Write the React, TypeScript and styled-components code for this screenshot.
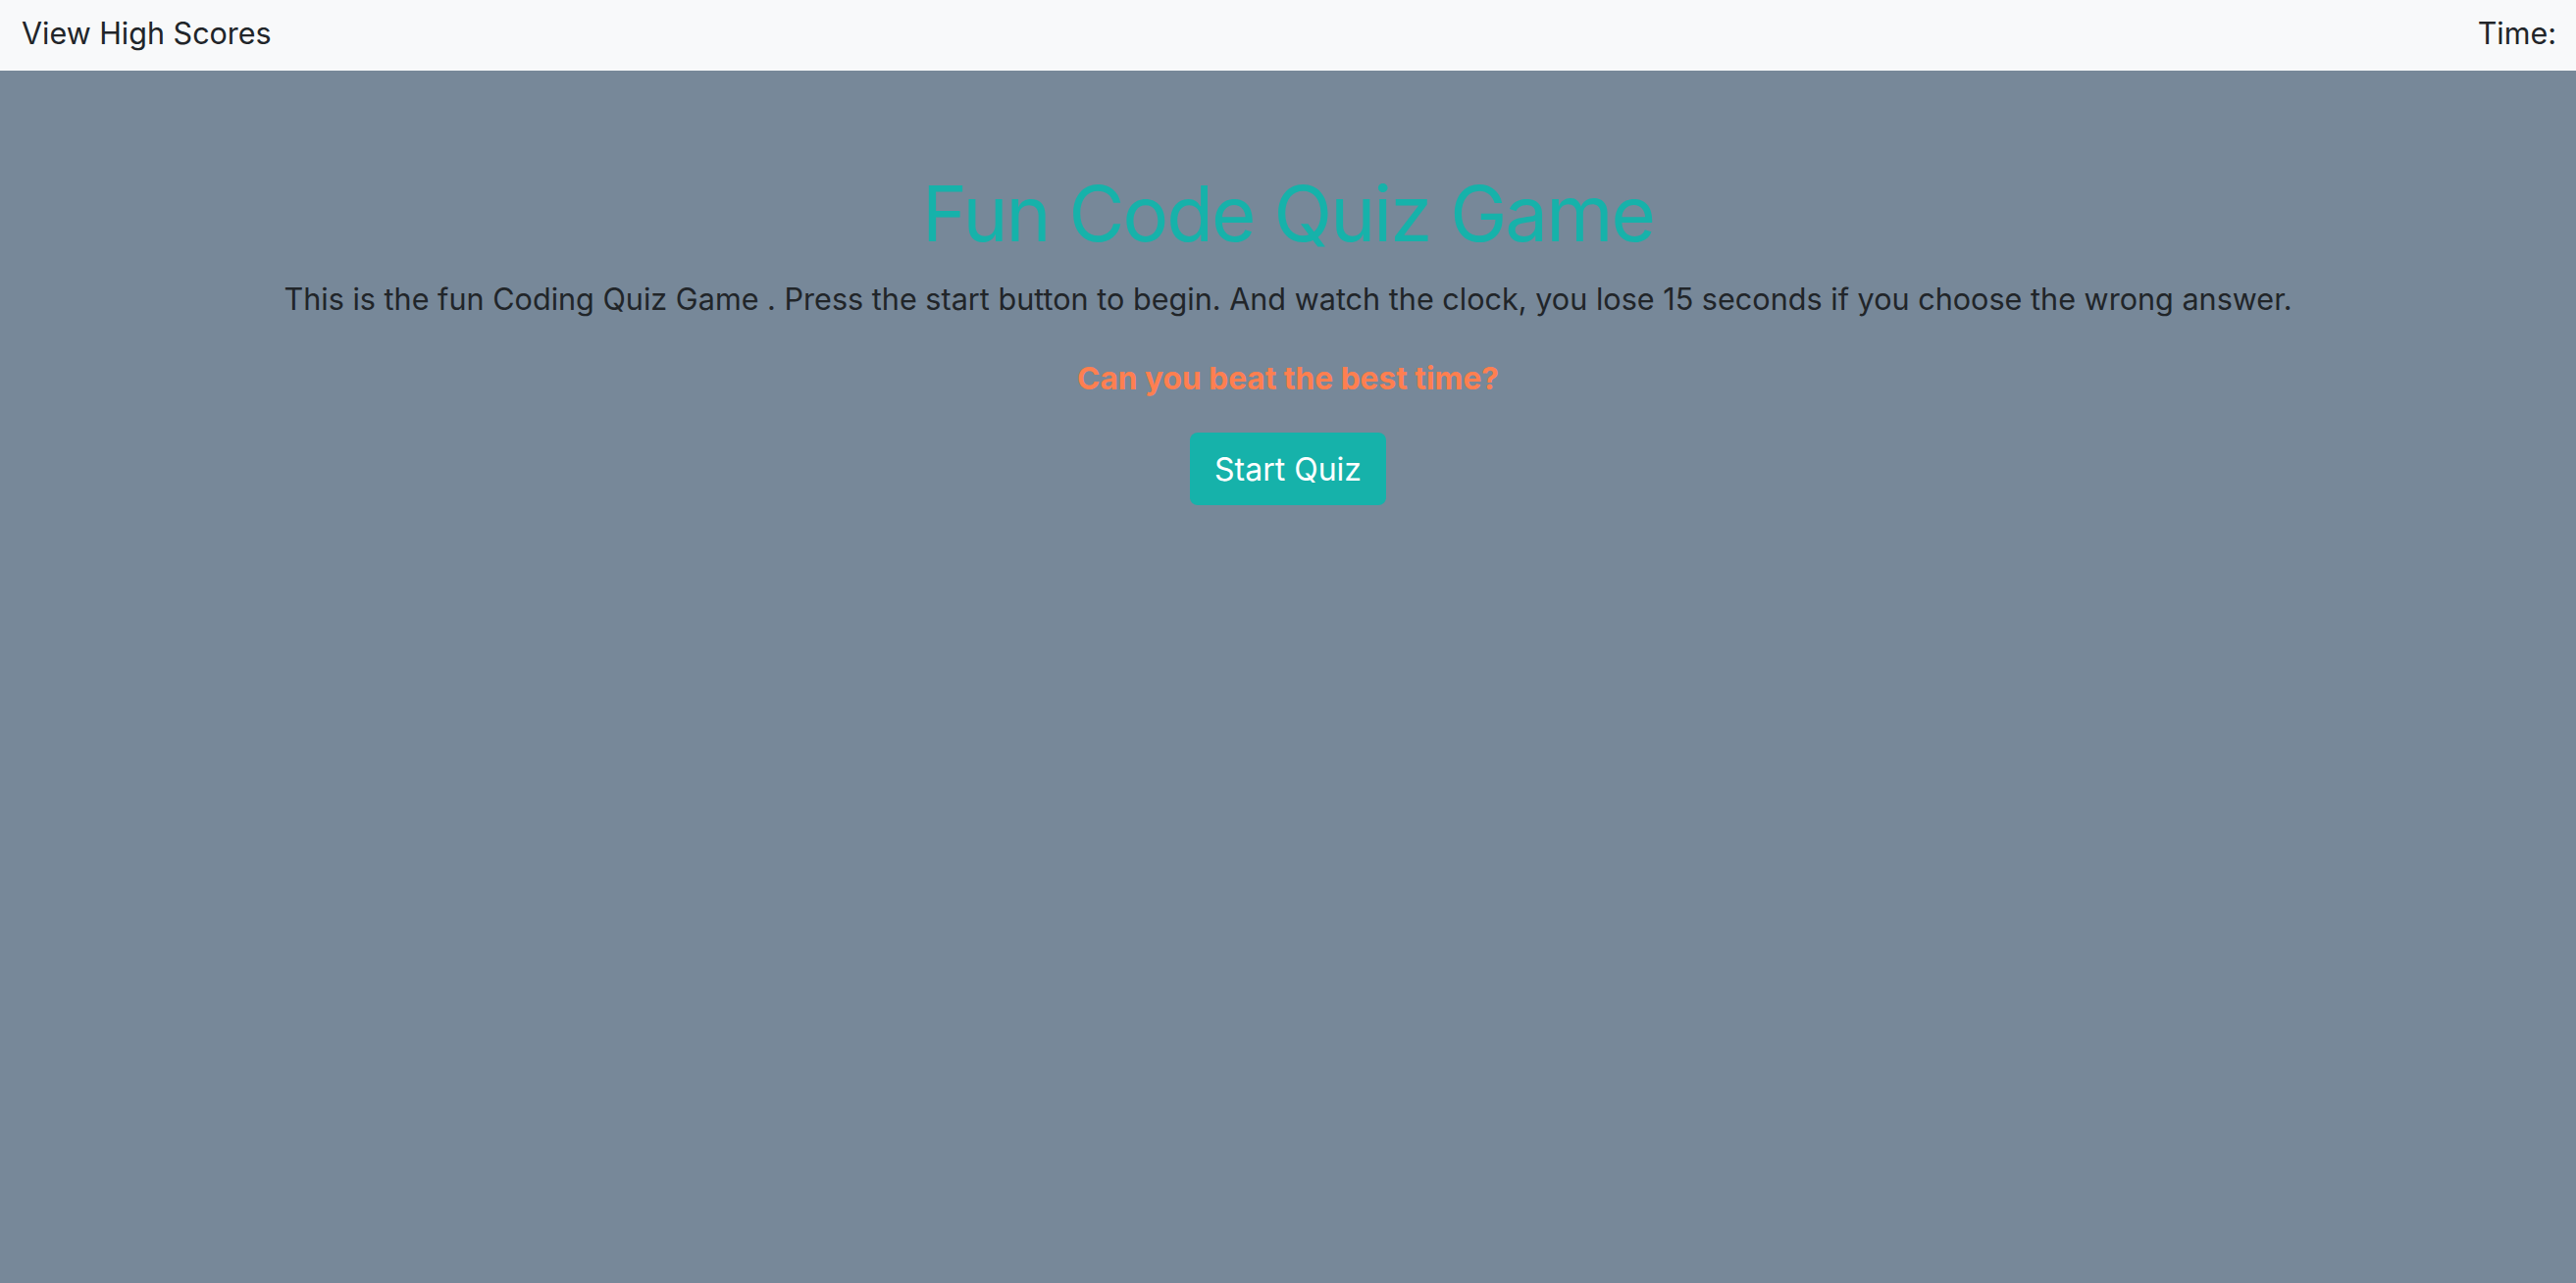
import React from "react";
import styled, { createGlobalStyle } from "styled-components";

const GlobalStyle = createGlobalStyle`
  html, body {
    margin: 0;
    padding: 0;
    background: #778899;
    font-family: Inter, "Noto Sans", "Liberation Sans", sans-serif;
    color: #212529;
  }
  * { box-sizing: border-box; }
`;

const Page = styled.div`
  min-height: 1308px;
  background: #778899;
  display: flex;
  flex-direction: column;
`;

const NavBar = styled.nav`
  height: 72px;
  background: #f8f9fa;
  display: flex;
  align-items: center;
  justify-content: space-between;
  padding: 0 20px 6px 22px;
`;

const NavLink = styled.a`
  font-size: 30.5px;
  color: #212529;
  text-decoration: none;
  cursor: pointer;
`;

const Timer = styled.span`
  font-size: 30.5px;
  color: #212529;
`;

const Main = styled.main`
  display: flex;
  flex-direction: column;
  align-items: center;
  text-align: center;
  padding-top: 99px;
`;

const Title = styled.h1`
  margin: 0 0 17px;
  font-size: 78px;
  font-weight: 400;
  letter-spacing: -2px;
  line-height: 1.2;
  color: #16b2aa;
`;

const Lead = styled.p`
  margin: 0;
  font-size: 30.6px;
  line-height: 1.5;
  color: #212529;
`;

const Challenge = styled.p`
  margin: 35px 0 0;
  font-size: 31.7px;
  font-weight: 700;
  line-height: 1.5;
  color: #ff7f50;
`;

const StartButton = styled.button`
  margin-top: 31px;
  height: 74px;
  padding: 0 25px;
  border: none;
  border-radius: 8px;
  background: #16b2aa;
  color: #ffffff;
  font-family: inherit;
  font-size: 32px;
  cursor: pointer;
`;

export default function App() {
  return (
    <>
      <GlobalStyle />
      <Page>
        <NavBar>
          <NavLink>View High Scores</NavLink>
          <Timer>Time:</Timer>
        </NavBar>
        <Main>
          <Title>Fun Code Quiz Game</Title>
          <Lead>
            This is the fun Coding Quiz Game . Press the start button to begin. And watch the clock, you lose 15 seconds if you choose the wrong answer.
          </Lead>
          <Challenge>Can you beat the best time?</Challenge>
          <StartButton>Start Quiz</StartButton>
        </Main>
      </Page>
    </>
  );
}
